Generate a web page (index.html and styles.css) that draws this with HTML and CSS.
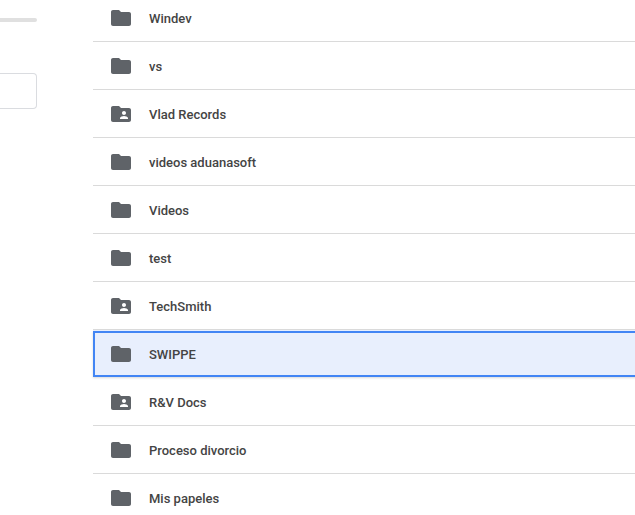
FILE: index.html
```html
<!DOCTYPE html>
<html lang="es">
<head>
<meta charset="utf-8">
<title>Drive</title>
<link rel="stylesheet" href="styles.css">
</head>
<body>
<svg class="defs" aria-hidden="true">
  <symbol id="folder" viewBox="0 0 24 24"><path d="M10 4H4c-1.100 0-1.990.9-1.990 2L2 18c0 1.100.9 2 2 2h16c1.100 0 2-.9 2-2V8c0-1.100-.9-2-2-2h-8l-2-2z"/></symbol>
  <symbol id="shared" viewBox="0 0 24 24"><path d="M20 6h-8l-2-2H4c-1.100 0-1.990.9-1.990 2L2 18c0 1.100.9 2 2 2h16c1.100 0 2-.9 2-2V8c0-1.100-.9-2-2-2zm-5 3c1.100 0 2 .9 2 2s-.9 2-2 2-2-.9-2-2 .9-2 2-2zm4 8h-8v-1c0-1.330 2.670-2 4-2s4 .67 4 2v1z"/></symbol>
</svg>
<div class="app">
  <aside class="sidebar">
    <div class="storage"></div>
    <button class="upgrade" type="button" aria-label="Comprar"></button>
  </aside>
  <main>
    <ul class="files">
      <li class="row"><svg class="icon"><use href="#folder"/></svg><span class="name">Windev</span></li>
      <li class="row"><svg class="icon"><use href="#folder"/></svg><span class="name">vs</span></li>
      <li class="row"><svg class="icon"><use href="#shared"/></svg><span class="name">Vlad Records</span></li>
      <li class="row"><svg class="icon"><use href="#folder"/></svg><span class="name">videos aduanasoft</span></li>
      <li class="row"><svg class="icon"><use href="#folder"/></svg><span class="name">Videos</span></li>
      <li class="row"><svg class="icon"><use href="#folder"/></svg><span class="name">test</span></li>
      <li class="row"><svg class="icon"><use href="#shared"/></svg><span class="name">TechSmith</span></li>
      <li class="row selected"><svg class="icon"><use href="#folder"/></svg><span class="name">SWIPPE</span></li>
      <li class="row"><svg class="icon"><use href="#shared"/></svg><span class="name">R&amp;V Docs</span></li>
      <li class="row"><svg class="icon"><use href="#folder"/></svg><span class="name">Proceso divorcio</span></li>
      <li class="row"><svg class="icon"><use href="#folder"/></svg><span class="name">Mis papeles</span></li>
    </ul>
  </main>
</div>
</body>
</html>
```
FILE: styles.css
```css
* { box-sizing: border-box; }
body {
  margin: 0;
  height: 100vh;
  overflow: hidden;
  background: #fff;
  color: #444;
  font: 500 13px/20px Roboto, sans-serif;
}
.defs { display: none; }
.app { display: grid; grid-template-columns: 37px 1fr; column-gap: 56px; }
.sidebar { padding-top: 18px; }
.storage { height: 4px; background: #e0e0e0; border-radius: 0 2px 2px 0; }
.upgrade {
  display: block;
  width: 100%;
  height: 36px;
  margin-top: 51px;
  border: 1px solid #dadce0;
  border-left: 0;
  border-radius: 0 4px 4px 0;
  background: #fff;
}
.files { margin: -6px 0 0; padding: 0; list-style: none; }
.row {
  display: flex;
  align-items: center;
  gap: 16px;
  height: 48px;
  padding: 1px 16px 0;
  border-bottom: 1px solid #dadada;
}
.icon { width: 24px; height: 24px; fill: #5f6368; }
.name { padding-top: 2px; }
.selected {
  height: 46px;
  margin: 1px -2px 1px 0;
  padding: 0 14px;
  border: 2px solid #4285f4;
  background: #e8effd;
  box-shadow: 0 -1px #e8effd, 0 1px 2px rgba(60, 64, 67, 0.2);
}
```
